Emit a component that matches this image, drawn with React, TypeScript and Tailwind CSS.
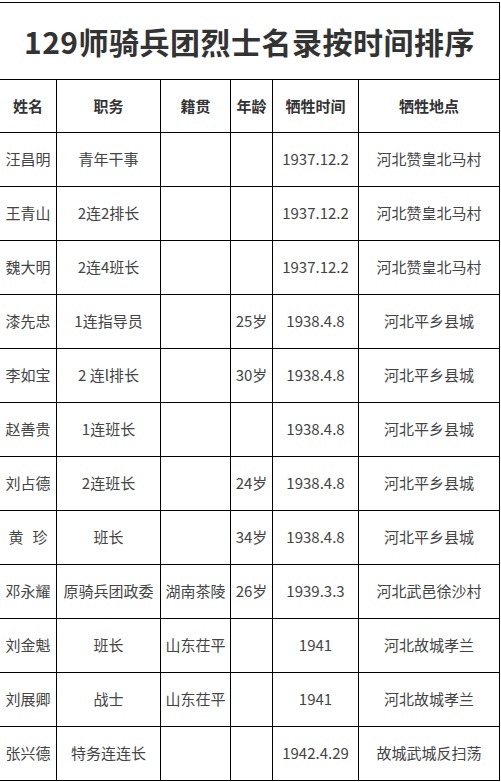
const columns = [
  { label: "姓名", width: "w-[57px]" },
  { label: "职务", width: "w-[104px]" },
  { label: "籍贯", width: "w-[70px]" },
  { label: "年龄", width: "w-[42px]" },
  { label: "牺牲时间", width: "w-[86px]" },
  { label: "牺牲地点", width: "w-[141px]" },
];

type Martyr = [string, string, string, string, string, string];

const martyrs: Martyr[] = [
  ["汪昌明", "青年干事", "", "", "1937.12.2", "河北赞皇北马村"],
  ["王青山", "2连2排长", "", "", "1937.12.2", "河北赞皇北马村"],
  ["魏大明", "2连4班长", "", "", "1937.12.2", "河北赞皇北马村"],
  ["漆先忠", "1连指导员", "", "25岁", "1938.4.8", "河北平乡县城"],
  ["李如宝", "2 连l排长", "", "30岁", "1938.4.8", "河北平乡县城"],
  ["赵善贵", "1连班长", "", "", "1938.4.8", "河北平乡县城"],
  ["刘占德", "2连班长", "", "24岁", "1938.4.8", "河北平乡县城"],
  ["黄 珍", "班长", "", "34岁", "1938.4.8", "河北平乡县城"],
  ["邓永耀", "原骑兵团政委", "湖南茶陵", "26岁", "1939.3.3", "河北武邑徐沙村"],
  ["刘金魁", "班长", "山东茌平", "", "1941", "河北故城孝兰"],
  ["刘展卿", "战士", "山东茌平", "", "1941", "河北故城孝兰"],
  ["张兴德", "特务连连长", "", "", "1942.4.29", "故城武城反扫荡"],
];

function NameCell({ name }: { name: string }) {
  // 黄 珍 has a wide gap between the characters in the source sheet
  if (name.includes(" ")) {
    const [a, b] = name.split(" ");
    return (
      <>
        {a}
        <span className="inline-block w-[9px]" />
        {b}
      </>
    );
  }
  return <>{name}</>;
}

export default function App() {
  return (
    <div
      className="w-[501px] overflow-hidden bg-white pt-[2px]"
      style={{ fontFamily: '"Noto Sans CJK SC", "Noto Sans", sans-serif' }}
    >
      <table className="-ml-px w-[501px] table-fixed border-collapse">
        <colgroup>
          {columns.map((c) => (
            <col key={c.label} className={c.width} />
          ))}
        </colgroup>
        <thead>
          <tr className="h-[77px]">
            <th
              colSpan={6}
              className="whitespace-nowrap border border-black p-0 text-center text-[30px] font-bold tracking-[0.5px] text-[#333]"
            >
              129师骑兵团烈士名录按时间排序
            </th>
          </tr>
          <tr className="h-[53px]">
            {columns.map((c) => (
              <th
                key={c.label}
                className="border border-black p-0 text-center text-[15px] font-bold text-[#333]"
              >
                {c.label}
              </th>
            ))}
          </tr>
        </thead>
        <tbody>
          {martyrs.map((row) => (
            <tr key={row[0]} className="h-[54px]">
              {row.map((cell, i) => (
                <td
                  key={i}
                  className="whitespace-nowrap border border-black p-0 text-center text-[15px] text-[#444]"
                >
                  {i === 0 ? <NameCell name={cell} /> : cell}
                </td>
              ))}
            </tr>
          ))}
        </tbody>
      </table>
    </div>
  );
}
